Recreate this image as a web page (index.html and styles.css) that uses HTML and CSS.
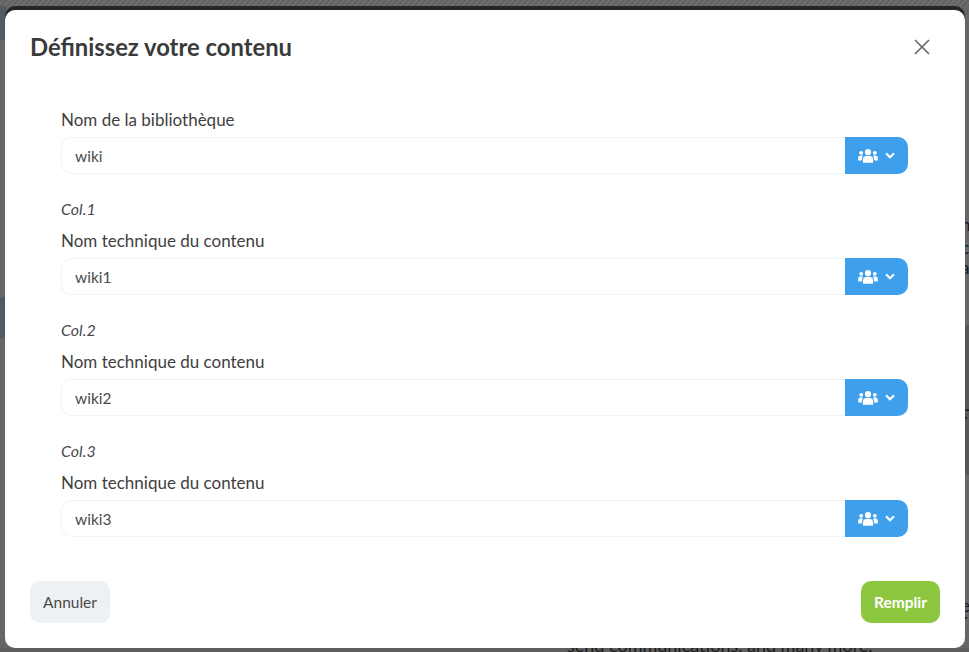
FILE: index.html
```html
<!DOCTYPE html>
<html lang="fr">

<head>
    <meta charset="UTF-8">
    <title>Définissez votre contenu</title>
    <link rel="stylesheet" href="styles.css">
</head>

<body>
    <div class="behind">
        <div class="hatch"></div>
        <div class="tint tintTop"></div>
        <div class="tint tintMid"></div>
        <div class="shade"></div>
        <div class="bottomStrip"></div>
        <span class="peek peek1">n</span>
        <span class="peek peek2">c</span>
        <span class="peek peek3">a</span>
        <span class="peek peek4">L</span>
        <span class="peek peek5">r</span>
        <span class="peek peek6">e</span>
        <span class="peek peek7">r</span>
        <p class="behindText">send communications, and many more.</p>
    </div>
    <div class="overlay">
        <div class="modal">
            <div class="modalHead">
                <h1 class="modalTitle">Définissez votre contenu</h1>
                <svg class="closeIcon" width="18" height="18" viewBox="0 0 18 18">
                    <path d="M2 2L16 16M16 2L2 16" stroke="#6b6b6b" stroke-width="1.7" fill="none"/>
                </svg>
            </div>
            <form class="modalBody">
                <div class="field">
                    <label class="fieldLabel">Nom de la bibliothèque</label>
                    <div class="inputRow">
                        <input type="text" class="textInput" value="wiki">
                        <button type="button" class="groupBtn">
                            <svg width="20" height="14" viewBox="0 0 20 14"><use href="#users"/></svg>
                            <svg width="10" height="7" viewBox="0 0 10 7"><use href="#chevron"/></svg>
                        </button>
                    </div>
                </div>
                <div class="field">
                    <div class="colName">Col.1</div>
                    <label class="fieldLabel">Nom technique du contenu</label>
                    <div class="inputRow">
                        <input type="text" class="textInput" value="wiki1">
                        <button type="button" class="groupBtn">
                            <svg width="20" height="14" viewBox="0 0 20 14"><use href="#users"/></svg>
                            <svg width="10" height="7" viewBox="0 0 10 7"><use href="#chevron"/></svg>
                        </button>
                    </div>
                </div>
                <div class="field">
                    <div class="colName">Col.2</div>
                    <label class="fieldLabel">Nom technique du contenu</label>
                    <div class="inputRow">
                        <input type="text" class="textInput" value="wiki2">
                        <button type="button" class="groupBtn">
                            <svg width="20" height="14" viewBox="0 0 20 14"><use href="#users"/></svg>
                            <svg width="10" height="7" viewBox="0 0 10 7"><use href="#chevron"/></svg>
                        </button>
                    </div>
                </div>
                <div class="field">
                    <div class="colName">Col.3</div>
                    <label class="fieldLabel">Nom technique du contenu</label>
                    <div class="inputRow">
                        <input type="text" class="textInput" value="wiki3">
                        <button type="button" class="groupBtn">
                            <svg width="20" height="14" viewBox="0 0 20 14"><use href="#users"/></svg>
                            <svg width="10" height="7" viewBox="0 0 10 7"><use href="#chevron"/></svg>
                        </button>
                    </div>
                </div>
            </form>
            <div class="modalFoot">
                <button type="button" class="btn btnCancel">Annuler</button>
                <button type="button" class="btn btnFill">Remplir</button>
            </div>
        </div>
    </div>

    <svg width="0" height="0" class="defs">
        <symbol id="users" viewBox="0 0 20 14">
            <circle cx="10" cy="3.2" r="3.1" fill="#fff"/>
            <circle cx="3.2" cy="3.8" r="1.9" fill="#fff"/>
            <circle cx="16.8" cy="3.8" r="1.9" fill="#fff"/>
            <path d="M4.9 13.8V10.4C4.9 8.2 6.6 7 8.3 7H11.7C13.4 7 15.1 8.2 15.1 10.4V13.8Z" fill="#fff"/>
            <path d="M0.2 11.4V8.8C0.2 7.5 1.1 6.5 2.3 6.5H4.1C4.6 6.5 4.9 6.7 5.2 7C4.2 7.8 3.9 8.9 3.9 11.4Z" fill="#fff"/>
            <path d="M19.8 11.4V8.8C19.8 7.5 18.9 6.5 17.7 6.5H15.9C15.4 6.5 15.1 6.7 14.8 7C15.8 7.8 16.1 8.9 16.1 11.4Z" fill="#fff"/>
        </symbol>
        <symbol id="chevron" viewBox="0 0 10 7">
            <path d="M1 1.2L5 5.2L9 1.2" stroke="#fff" stroke-width="2.1" fill="none"/>
        </symbol>
    </svg>
</body>

</html>
```
FILE: styles.css
```css
* {
    box-sizing: border-box;
    font-family: 'Lato', 'Noto Sans', sans-serif;
}
html, body {
    height: 100%;
}
body {
    margin: 0;
    overflow: hidden;
    background: #666666;
}
.behind {
    position: absolute;
    inset: 0;
    overflow: hidden;
}
.hatch {
    position: absolute;
    top: 0;
    left: 0;
    right: 0;
    height: 6px;
    background: repeating-linear-gradient(135deg, #626262 0, #626262 2px, #6e6e6e 2px, #6e6e6e 4px);
}
.tint {
    position: absolute;
    left: 0;
    width: 6px;
    background: #525a64;
}
.tintTop {
    top: 6px;
    height: 34px;
}
.tintMid {
    top: 297px;
    height: 41px;
}
.shade {
    position: absolute;
    top: 325px;
    right: 0;
    width: 6px;
    height: 150px;
    background: #575757;
}
.bottomStrip {
    position: absolute;
    left: 0;
    right: 0;
    bottom: 0;
    height: 4px;
    background: #5e5e5e;
}
.peek {
    position: absolute;
    left: 961px;
    color: #1b1b1b;
    font-size: 17px;
    line-height: 14px;
}
.peek1 { top: 218px; }
.peek2 { top: 241px; }
.peek3 { top: 261px; }
.peek4 { top: 398px; }
.peek5 { top: 413px; }
.peek6 { top: 599px; }
.peek7 { top: 613px; }
.behindText {
    position: absolute;
    left: 567px;
    top: 635px;
    margin: 0;
    color: #1b1b1b;
    font-size: 18px;
    line-height: 20px;
    white-space: nowrap;
}
.overlay {
    position: absolute;
    inset: 0;
    padding: 10px 4px 4px 5px;
}
.modal {
    display: flex;
    flex-direction: column;
    height: 100%;
    border-radius: 10px;
    background: #ffffff;
    box-shadow: 0 -4px 0 #262626;
}
.modalHead {
    display: flex;
    justify-content: space-between;
    align-items: center;
    height: 74px;
    padding: 0 34px 0 25px;
}
.modalTitle {
    margin: 0;
    color: #3a3a3a;
    font-size: 23.8px;
    font-weight: 700;
}
.modalBody {
    display: flex;
    flex-direction: column;
    gap: 25px;
    padding: 25px 57px 0 56px;
}
.field {
    display: flex;
    flex-direction: column;
}
.colName {
    margin-bottom: 11px;
    color: #4a4a4a;
    font-size: 16px;
    font-style: italic;
    line-height: 20px;
}
.fieldLabel {
    margin-bottom: 6px;
    color: #404040;
    font-size: 17px;
    line-height: 22px;
}
.inputRow {
    display: flex;
    height: 37px;
}
.textInput {
    flex: 1;
    min-width: 0;
    padding: 0 13px;
    border: 1px solid #f2f3f5;
    border-right: 0;
    border-radius: 10px 0 0 10px;
    color: #4a4a4a;
    font-size: 15.5px;
    outline: none;
}
.groupBtn {
    display: flex;
    align-items: center;
    gap: 7px;
    width: 63px;
    padding: 0 0 0 13px;
    border: 0;
    border-radius: 0 10px 10px 0;
    background: #3e9fec;
}
.modalFoot {
    display: flex;
    justify-content: space-between;
    margin-top: auto;
    padding: 0 25px 25px;
}
.btn {
    height: 42px;
    border: 0;
    border-radius: 10px;
    font-size: 15.5px;
}
.btnCancel {
    width: 80px;
    background: #eef1f4;
    color: #4a4a4a;
}
.btnFill {
    width: 79px;
    background: #8dc63f;
    color: #ffffff;
    font-weight: 700;
}
.defs {
    position: absolute;
}
```
